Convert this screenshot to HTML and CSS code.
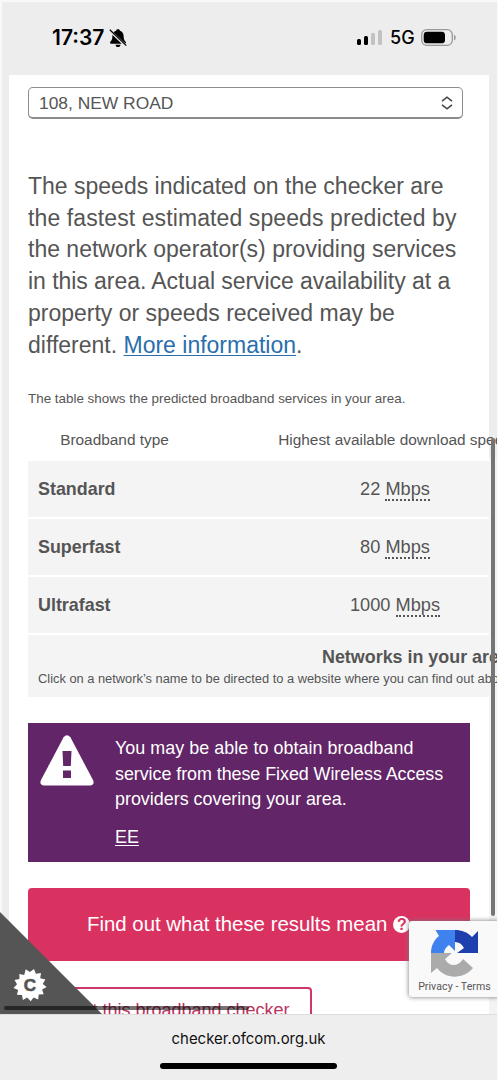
FILE: index.html
```html
<!DOCTYPE html>
<html lang="en">
<head>
<meta charset="utf-8">
<title>Broadband checker</title>
<link rel="stylesheet" href="styles.css">
</head>
<body>
<div class="phone">
  <header class="status">
    <div class="clock"><span>17:37</span>
      <svg class="bell" viewBox="0 0 18 20"><path d="M9 1.200c1.300 0 1.900.7 1.900 1.600 2.500.8 3.700 2.900 3.700 5.300 0 3.400.9 4.600 2 5.700.8.800.4 1.900-.6 1.900H2c-1 0-1.400-1.100-.6-1.900 1.100-1.100 2-2.300 2-5.700 0-2.400 1.200-4.500 3.700-5.300 0-.9.600-1.600 1.900-1.600zM6.500 16.700h5c-.2 1.400-1.200 2.300-2.500 2.300s-2.300-.9-2.500-2.300z"/><path class="bell-gap" d="M1 2.800 17 18"/><path class="bell-slash" d="M.8 1.800 17.300 17.600"/></svg>
    </div>
    <div class="signals">
      <div class="bars"><i class="b1"></i><i class="b2"></i><i class="b3"></i><i class="b4"></i></div>
      <span class="net">5G</span>
      <svg class="battery" viewBox="0 0 36 17"><rect x=".7" y=".7" width="30.600" height="15.600" rx="5" fill="none" stroke="#999" stroke-width="1.300"/><rect x="2.700" y="2.700" width="21.300" height="11.600" rx="3.400"/><path d="M33 5.700c2.300.8 2.300 4.800 0 5.600z" fill="#999"/></svg>
    </div>
  </header>

  <main class="viewport">
    <section class="card">
      <div class="select"><span>108, NEW ROAD</span>
        <svg viewBox="0 0 12 14"><path d="M1 5.200 6 1.200l5 4M1 8.800l5 4 5-4"/></svg>
      </div>
      <p class="intro">The speeds indicated on the checker are<br><span class="loose">the fastest estimated speeds predicted by</span><br>the network operator(s) providing services<br><span class="tight">in this area. Actual service availability at a</span><br>property or speeds received may be<br>different. <a href="#">More information</a>.</p>
      <p class="caption">The table shows the predicted broadband services in your area.</p>
      <div class="table">
        <div class="row head"><span>Broadband type</span><span>Highest available download speed</span></div>
        <div class="row"><b>Standard</b><span>22 <abbr>Mbps</abbr></span></div>
        <div class="row"><b>Superfast</b><span>80 <abbr>Mbps</abbr></span></div>
        <div class="row"><b>Ultrafast</b><span>1000 <abbr>Mbps</abbr></span></div>
        <div class="networks"><b>Networks in your area</b><span>Click on a network’s name to be directed to a website where you can find out about</span></div>
      </div>
      <div class="notice">
        <svg class="warn" viewBox="0 0 54 51"><path fill="#fff" d="M23.600 2.300Q27-2 30.400 2.300L53 45Q55 50 50 50.500H4Q-1 50 1 45z"/><path fill="#622567" d="M22.500 16h9l-.7 15h-7.600zM23 35.500h8V43h-8z"/></svg>
        <div><p><span class="wide">You may be able to obtain broadband</span><br><span class="tight">service from these Fixed Wireless Access</span><br>providers covering your area.</p><a href="#">EE</a></div>
      </div>
      <div class="primary"><span>Find out what these results mean</span><span class="help">?</span></div>
      <div class="outline">About this broadband checker</div>
    </section>
    <svg class="corner" viewBox="0 0 102 102"><path fill="#555" d="M0 0 102 102H0z"/><path fill="#fff" d="M25.700 57.200 29.900 60 34 57l1.900 4.700 5.100-.6-.8 5.200 5.200 1.300-2.700 4.300 4 3.100-4.600 2.400 1.600 4.800-5 .2-.5 5-4.600-2-2.900 3.900-3.500-3.700-4.300 2.400-.9-5-5.100-.2 1.300-4.800-4.700-2 3.500-3.700-2.500-4.400 5-.8-.2-5 4.900.8z"/></svg>
    <span class="corner-letter">C</span>
    <div class="captcha">
      <svg viewBox="0 0 47 48"><path fill="#3f82ed" d="M4.500 1H24v21l-6-6c-3 2-5 5-5 8H0c0-7 3-13 8-17z"/><path fill="#1e3fae" d="M24 1c7 0 12 2 17 7l6-6v22H26l7-5c-2-4-5-6-9-6z"/><path fill="#ababab" d="M0 24h21l-7 6c4 8 13 8 18 0l10 9c-9 11-27 12-36 0l-6 5z"/></svg>
      <span>Privacy - Terms</span>
    </div>
    <i class="scroll-y"></i><i class="scroll-x"></i>
  </main>

  <footer class="urlbar"><span>checker.ofcom.org.uk</span><i></i></footer>
</div>
</body>
</html>
```
FILE: styles.css
```css
* { box-sizing: border-box; }
body { margin: 0; background: #ededed; font-family: "Liberation Sans", Arial, sans-serif; color: #555; }
p { margin: 0; }
.phone { width: 498px; height: 1080px; display: flex; flex-direction: column; overflow: hidden; background: #ededed; border-right: 1px solid #fafafa; box-shadow: inset 2px 2px #f8f8f8; }
.status { height: 75px; flex: none; display: flex; justify-content: space-between; padding: 27px 40px 0 52px; color: #000; font-family: Inter, sans-serif; }
.clock { display: flex; height: 21px; align-items: center; gap: 5px; font-size: 21px; font-weight: 600; }
.bell { width: 18px; height: 20px; }
.bell-gap { stroke: #ededed; stroke-width: 2.600; }
.bell-slash { stroke: #000; stroke-width: 1.300; }
.signals { display: flex; height: 21px; align-items: center; }
.bars { display: flex; align-items: flex-end; gap: 3px; height: 15px; margin-right: 8px; }
.bars i { width: 4px; border-radius: 1.500px; background: #000; }
.bars .b1 { height: 6px; }
.bars .b2 { height: 9px; }
.bars .b3 { height: 12px; background: #c2c2c2; }
.bars .b4 { height: 15px; background: #c2c2c2; }
.net { font-size: 18px; font-weight: 500; width: 24px; margin-right: 7px; }
.battery { width: 36px; height: 17px; }
.viewport { position: relative; height: 939px; flex: none; overflow: hidden; margin-right: -1px; padding: 0 9px; background: linear-gradient(#f4f4f4, #f4f4f4) 489px 383px / 9px 556px no-repeat; }
.card { height: 100%; background: #fff; padding: 12px 19px 0; }
.select { width: 435px; height: 32px; border: 1px solid #8c8c8c; border-bottom-width: 2px; border-radius: 5px; display: flex; align-items: center; justify-content: space-between; padding: 1px 9px 0 10px; font-size: 17.400px; }
.select svg { width: 12px; height: 14px; fill: none; stroke: #444; stroke-width: 1.600; }
.intro { margin-top: 52px; font-size: 23px; line-height: 31.700px; white-space: nowrap; }
.loose { letter-spacing: .1px; }
.wide { letter-spacing: .05px; }
.tight { letter-spacing: -.05px; }
.intro a { color: #2a6ead; text-underline-offset: 2px; text-decoration-thickness: 1px; }
.caption { margin-top: 29px; font-size: 13.400px; line-height: 18px; white-space: nowrap; }
.table { margin-top: 10px; width: 561px; }
.row { display: grid; grid-template-columns: 173px 388px; align-items: center; height: 56px; margin-bottom: 2px; background: #f4f4f4; font-size: 17.900px; }
.row span { text-align: center; font-size: 18.200px; }
.row b { padding-left: 10px; }
.head { height: 43px; margin: 0; background: none; }
.head span { font-size: 15.400px; }
.row abbr { border-bottom: 2px dotted #555; }
.networks { height: 62px; background: #f4f4f4; padding: 12px 0 0 10px; display: flex; flex-direction: column; gap: 3px; white-space: nowrap; }
.networks b { margin-left: 284px; font-size: 17.900px; line-height: 21px; }
.networks span { font-size: 12.850px; line-height: 16px; }
.notice { width: 442px; height: 139px; margin-top: 26px; background: #622567; color: #fff; display: flex; gap: 21px; padding: 13px 12px 0; font-size: 17.900px; line-height: 25.500px; white-space: nowrap; }
.warn { width: 54px; height: 51px; flex: none; margin-top: -1px; }
.notice a { display: block; color: #fff; margin-top: 12px; text-underline-offset: 2px; text-decoration-thickness: 1px; }
.primary { width: 442px; height: 73px; margin-top: 26px; border-radius: 4px; background: #d93261; color: #fff; display: flex; align-items: center; gap: 6px; padding-left: 59px; font-size: 20.400px; white-space: nowrap; }
.help { width: 17px; height: 17px; border-radius: 50%; background: #fff; color: #d93261; font-weight: 700; font-size: 16px; line-height: 17px; text-align: center; }
.outline { width: 284px; height: 60px; margin-top: 26px; border: 2px solid #ce3867; border-radius: 4px; color: #b93560; font-size: 18px; line-height: 42px; text-align: center; }
.corner { position: absolute; left: 0; bottom: 0; width: 102px; height: 102px; }
.corner-letter { position: absolute; left: 22px; bottom: 18px; width: 16px; text-align: center; color: #555; font-size: 17px; line-height: 20px; font-weight: 700; -webkit-text-stroke: .6px #555; }
.captcha { position: absolute; right: -2px; top: 846px; width: 91px; height: 76px; border-radius: 3px; background: #f9f9f9; box-shadow: 0 0 5px #777; display: flex; flex-direction: column; align-items: center; padding: 8px 0 0; gap: 3px; font-family: Roboto, sans-serif; font-size: 10.600px; white-space: nowrap; }
.captcha svg { width: 47px; height: 48px; }
.captcha span { letter-spacing: .05px; }
.scroll-y { position: absolute; left: 491px; top: 363px; width: 4px; height: 478px; border-radius: 2px; background: #757575; }
.scroll-x { position: absolute; left: 4px; bottom: 4px; width: 245px; height: 4px; border-radius: 2px; background: rgba(0,0,0,.55); }
.urlbar { height: 66px; color: #111; border-top: 1px solid #ddd; background: #efeeef; display: flex; flex-direction: column; align-items: center; padding-top: 14px; font-family: Inter, sans-serif; font-size: 14.950px; line-height: 20px; }
.urlbar i { width: 177px; height: 6px; border-radius: 3px; background: #000; margin-top: 14px; }
```
